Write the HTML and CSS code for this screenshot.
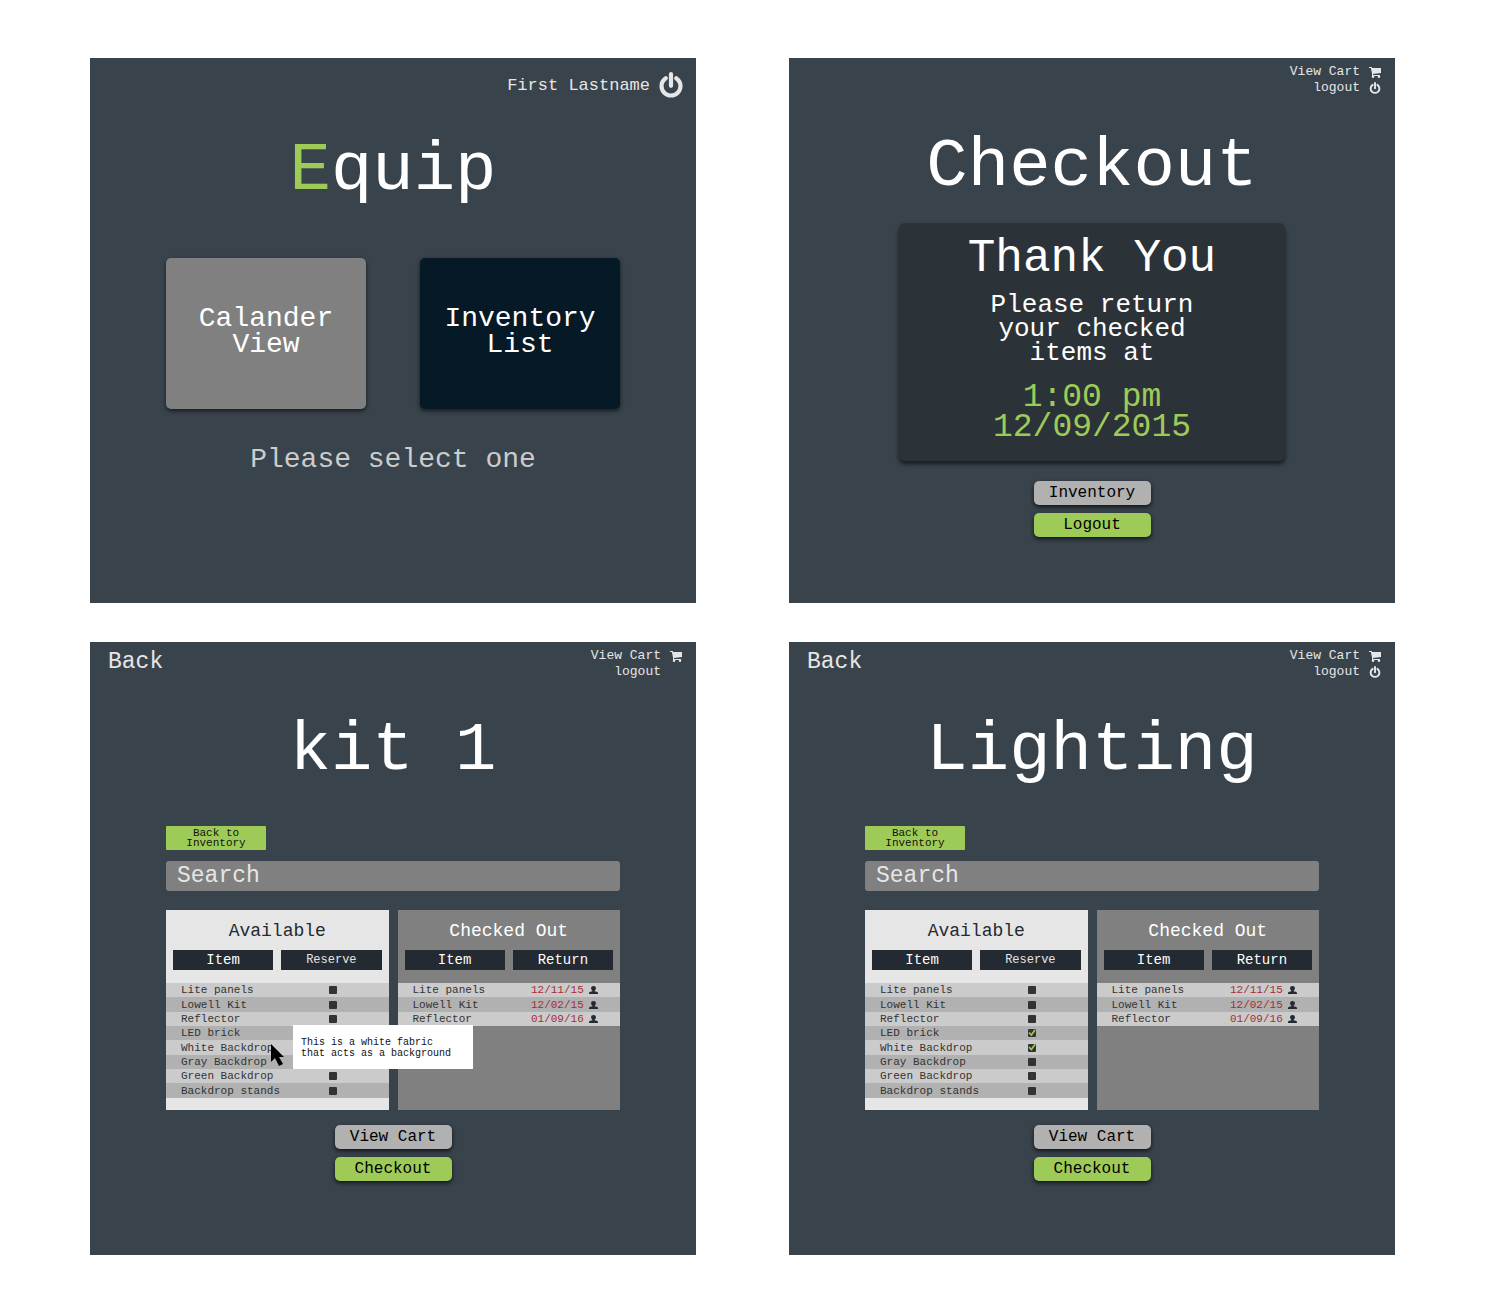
FILE: index.html
```html
<!DOCTYPE html>
<html lang="en">
<head>
<meta charset="utf-8">
<meta name="viewport" content="width=device-width, initial-scale=1">
<title>Equip</title>
<link rel="stylesheet" href="styles.css">
</head>
<body>
<svg class="sprite" aria-hidden="true">
  <symbol id="power" viewBox="0 0 24 26">
    <path d="M6.8 6.200C4 8.200 2.500 10.800 2.500 14a9.500 9.500 0 0 0 19 0c0-3.200-1.500-5.800-4.300-7.800" fill="none" stroke="currentColor" stroke-width="4.200" stroke-linecap="round"/>
    <path d="M12 2.200v11.600" fill="none" stroke="currentColor" stroke-width="4.200" stroke-linecap="round"/>
  </symbol>
  <symbol id="cart" viewBox="0 0 24 24">
    <path d="M0 2h5.500l1 2H24v10L8 16v2h14v2H6V15L3.800 4H0z" fill="currentColor"/>
    <circle cx="8" cy="21.500" r="2.500" fill="currentColor"/>
    <circle cx="20" cy="21.500" r="2.500" fill="currentColor"/>
  </symbol>
  <symbol id="user" viewBox="0 0 18 16">
    <path d="M9 0c3 0 4.800 1.800 4.800 4.500 0 2.300-1.300 3.500-2.300 4.700v1.600c2.500.2 6.500.4 6.500 3V16H0v-2.200c0-2.600 4-2.800 6.500-3V9.200C5.500 8 4.200 6.800 4.200 4.500 4.200 1.800 6 0 9 0z" fill="currentColor"/>
  </symbol>
</svg>

<main class="board">
  <section class="screen screen-home">
    <header class="topbar">
      <a class="account" href="#">First Lastname <svg class="icon-large" role="img" aria-label="Log out"><use href="#power"/></svg></a>
    </header>
    <h1 class="title"><span class="accent">E</span>quip</h1>
    <div class="content choices">
      <button class="choice choice-gray" type="button">Calander<br>View</button>
      <button class="choice choice-navy" type="button">Inventory<br>List</button>
    </div>
    <p class="hint">Please select one</p>
  </section>

  <section class="screen">
    <header class="topbar">
      <nav class="links">
        <a href="#">View Cart <svg class="icon"><use href="#cart"/></svg></a>
        <a href="#">logout <svg class="icon"><use href="#power"/></svg></a>
      </nav>
    </header>
    <h1 class="title">Checkout</h1>
    <div class="receipt">
      <h2 class="thanks">Thank You</h2>
      <p class="message">Please return<br>your checked<br>items at</p>
      <p class="due">1:00 pm<br>12/09/2015</p>
    </div>
    <div class="actions actions-receipt">
      <button class="button" type="button">Inventory</button>
      <button class="button button-green" type="button">Logout</button>
    </div>
  </section>

  <section class="screen screen-lists">
    <header class="topbar">
      <a class="back" href="#">Back</a>
      <nav class="links">
        <a href="#">View Cart <svg class="icon"><use href="#cart"/></svg></a>
        <a href="#">logout <span class="icon"></span></a>
      </nav>
    </header>
    <h1 class="title">kit 1</h1>
    <div class="content">
      <button class="to-inventory" type="button">Back to<br>Inventory</button>
      <input class="search" type="search" placeholder="Search" aria-label="Search">
      <div class="lists">
        <section class="list list-available">
          <h2 class="list-title">Available</h2>
          <table class="items">
            <thead><tr><th><span class="column">Item</span></th><th><span class="column column-small">Reserve</span></th></tr></thead>
            <tbody>
              <tr><td><label for="k1">Lite panels</label></td><td><input id="k1" type="checkbox"></td></tr>
              <tr><td><label for="k2">Lowell Kit</label></td><td><input id="k2" type="checkbox"></td></tr>
              <tr><td><label for="k3">Reflector</label></td><td><input id="k3" type="checkbox"></td></tr>
              <tr><td><label for="k4">LED brick</label></td><td><input id="k4" type="checkbox"></td></tr>
              <tr><td class="hovered"><label for="k5">White Backdrop</label>
                <span class="tooltip" role="tooltip">This is a white fabric<br>that acts as a background</span>
                <svg class="pointer" viewBox="0 0 14 22" aria-hidden="true"><path d="M1 0v18l4-4 4 8 4-2-4-7h5z"/></svg></td><td><input id="k5" type="checkbox"></td></tr>
              <tr><td><label for="k6">Gray Backdrop</label></td><td><input id="k6" type="checkbox"></td></tr>
              <tr><td><label for="k7">Green Backdrop</label></td><td><input id="k7" type="checkbox"></td></tr>
              <tr><td><label for="k8">Backdrop stands</label></td><td><input id="k8" type="checkbox"></td></tr>
            </tbody>
          </table>
        </section>
        <section class="list list-out">
          <h2 class="list-title">Checked Out</h2>
          <table class="items">
            <thead><tr><th><span class="column">Item</span></th><th><span class="column">Return</span></th></tr></thead>
            <tbody>
              <tr><td>Lite panels</td><td><span class="return">12/11/15 <svg class="user"><use href="#user"/></svg></span></td></tr>
              <tr><td>Lowell Kit</td><td><span class="return">12/02/15 <svg class="user"><use href="#user"/></svg></span></td></tr>
              <tr><td>Reflector</td><td><span class="return">01/09/16 <svg class="user"><use href="#user"/></svg></span></td></tr>
            </tbody>
          </table>
        </section>
      </div>
    </div>
    <div class="actions">
      <button class="button" type="button">View Cart</button>
      <button class="button button-green" type="button">Checkout</button>
    </div>
  </section>

  <section class="screen screen-lists">
    <header class="topbar">
      <a class="back" href="#">Back</a>
      <nav class="links">
        <a href="#">View Cart <svg class="icon"><use href="#cart"/></svg></a>
        <a href="#">logout <svg class="icon"><use href="#power"/></svg></a>
      </nav>
    </header>
    <h1 class="title">Lighting</h1>
    <div class="content">
      <button class="to-inventory" type="button">Back to<br>Inventory</button>
      <input class="search" type="search" placeholder="Search" aria-label="Search">
      <div class="lists">
        <section class="list list-available">
          <h2 class="list-title">Available</h2>
          <table class="items">
            <thead><tr><th><span class="column">Item</span></th><th><span class="column column-small">Reserve</span></th></tr></thead>
            <tbody>
              <tr><td><label for="l1">Lite panels</label></td><td><input id="l1" type="checkbox"></td></tr>
              <tr><td><label for="l2">Lowell Kit</label></td><td><input id="l2" type="checkbox"></td></tr>
              <tr><td><label for="l3">Reflector</label></td><td><input id="l3" type="checkbox"></td></tr>
              <tr><td><label for="l4">LED brick</label></td><td><input id="l4" type="checkbox" checked></td></tr>
              <tr><td><label for="l5">White Backdrop</label></td><td><input id="l5" type="checkbox" checked></td></tr>
              <tr><td><label for="l6">Gray Backdrop</label></td><td><input id="l6" type="checkbox"></td></tr>
              <tr><td><label for="l7">Green Backdrop</label></td><td><input id="l7" type="checkbox"></td></tr>
              <tr><td><label for="l8">Backdrop stands</label></td><td><input id="l8" type="checkbox"></td></tr>
            </tbody>
          </table>
        </section>
        <section class="list list-out">
          <h2 class="list-title">Checked Out</h2>
          <table class="items">
            <thead><tr><th><span class="column">Item</span></th><th><span class="column">Return</span></th></tr></thead>
            <tbody>
              <tr><td>Lite panels</td><td><span class="return">12/11/15 <svg class="user"><use href="#user"/></svg></span></td></tr>
              <tr><td>Lowell Kit</td><td><span class="return">12/02/15 <svg class="user"><use href="#user"/></svg></span></td></tr>
              <tr><td>Reflector</td><td><span class="return">01/09/16 <svg class="user"><use href="#user"/></svg></span></td></tr>
            </tbody>
          </table>
        </section>
      </div>
    </div>
    <div class="actions">
      <button class="button" type="button">View Cart</button>
      <button class="button button-green" type="button">Checkout</button>
    </div>
  </section>
</main>
</body>
</html>
```

FILE: styles.css
```css
:root {
  --slate: #39434b;
  --gray: #808080;
  --silver: #b1b1b1;
  --green: #9ecb58;
  --ink: #242a31;
  --light: #e6e6e6;
}

* {
  box-sizing: border-box;
}

body {
  margin: 0;
  background: #fff;
  color: #fff;
  font-family: "Liberation Mono", "Courier New", monospace;
}

h1, h2, p {
  margin: 0;
  font-weight: 400;
}

a {
  color: inherit;
  text-decoration: none;
}

button, input {
  font-family: inherit;
  border: 0;
  margin: 0;
}

button {
  cursor: pointer;
}

.sprite {
  display: none;
}

/* Board of screens */
.board {
  display: grid;
  grid-template-columns: 1fr 1fr;
  gap: 39px 93px;
  padding: 58px 105px 43px 90px;
}

.screen {
  background: var(--slate);
  padding-bottom: 66px;
}

.screen-lists {
  padding-bottom: 74px;
}

.topbar {
  display: flex;
  align-items: flex-start;
  min-height: 69px;
  padding: 6px 14px 0 18px;
  color: var(--light);
}

.screen-home .topbar {
  min-height: 73px;
  padding: 14px 13px 0;
}

.account {
  display: flex;
  align-items: center;
  gap: 9px;
  margin-left: auto;
  font-size: 17px;
}

.icon-large {
  width: 24px;
  height: 26px;
}

.back {
  font-size: 23px;
  line-height: 28px;
}

.links {
  display: flex;
  flex-direction: column;
  margin-left: auto;
  font-size: 13px;
  line-height: 16px;
}

.links a {
  display: flex;
  align-items: center;
  justify-content: flex-end;
  gap: 9px;
}

.icon {
  width: 12px;
  height: 12px;
}

.title {
  font-size: 69px;
  line-height: 80px;
  text-align: center;
}

.accent {
  color: var(--green);
}

.content {
  padding: 0 76px;
}

/* Home */
.choices {
  display: grid;
  grid-template-columns: 1fr 1fr;
  gap: 54px;
  margin-top: 47px;
}

.choice {
  min-height: 151px;
  padding: 0 0 4px;
  border-radius: 5px;
  box-shadow: 0 2px 4px rgba(0, 0, 0, 0.6);
  color: #fff;
  font-size: 28px;
  line-height: 26px;
}

.choice-gray {
  background: var(--gray);
}

.choice-navy {
  background: #061926;
}

.hint {
  margin-top: 35px;
  color: #ccc;
  font-size: 28px;
  line-height: 32px;
  text-align: center;
}

/* Checkout */
.receipt {
  margin: 16px 110px 0;
  padding: 10px 0 18px;
  border-radius: 6px;
  background: #2c3338;
  box-shadow: 0 3px 4px rgba(0, 0, 0, 0.6);
  text-align: center;
}

.thanks {
  font-size: 46px;
  line-height: 52px;
}

.message {
  margin-top: 8px;
  font-size: 26px;
  line-height: 24px;
}

.due {
  margin-top: 18px;
  color: var(--green);
  font-size: 33px;
  line-height: 30px;
}

.actions {
  display: flex;
  flex-direction: column;
  align-items: center;
  gap: 8px;
  margin-top: 15px;
}

.actions-receipt {
  margin-top: 20px;
}

.button {
  width: 117px;
  height: 24px;
  padding: 0;
  border-radius: 5px;
  background: var(--silver);
  box-shadow: 0 2px 4px rgba(0, 0, 0, 0.7);
  color: #000;
  font-size: 16px;
  line-height: 24px;
}

.button-green {
  background: var(--green);
}

/* Inventory lists */
.to-inventory {
  display: block;
  width: 100px;
  height: 24px;
  margin-top: 35px;
  padding: 0;
  border-radius: 1px;
  background: var(--green);
  color: #111;
  font-size: 11px;
  line-height: 10px;
}

.search {
  display: block;
  width: 100%;
  height: 30px;
  margin-top: 11px;
  padding: 0 11px;
  border-radius: 3px;
  background: var(--gray);
  color: var(--light);
  font-size: 23px;
  appearance: none;
}

.search::placeholder {
  color: var(--light);
}

.lists {
  display: grid;
  grid-template-columns: 1fr 1fr;
  gap: 9px;
  margin-top: 19px;
}

.list {
  min-height: 200px;
  padding-top: 11px;
}

.list-available {
  background: var(--light);
  color: var(--ink);
}

.list-out {
  background: var(--gray);
}

.list-title {
  font-size: 18px;
  line-height: 20px;
  text-align: center;
}

.items {
  width: 100%;
  margin-top: 9px;
  border-collapse: collapse;
  table-layout: fixed;
  color: #333;
  font-size: 11px;
  line-height: 14px;
}

.items th {
  padding: 0 4px 13px 7px;
  font-weight: 400;
}

.items th + th {
  padding: 0 7px 13px 4px;
}

.column {
  display: block;
  background: var(--ink);
  color: #fff;
  font-size: 14px;
  line-height: 20px;
}

.column-small {
  color: var(--light);
  font-size: 12px;
}

.items td {
  height: 14px;
  padding: 0 0 0 15px;
  white-space: nowrap;
}

.items td + td {
  padding: 0;
}

.items tbody tr {
  background: #cbcbcb;
}

.items tbody tr:nth-child(even) {
  background: var(--silver);
}

.items tbody tr:nth-child(3n + 2) td {
  height: 15px;
}

.items input {
  display: block;
  width: 8px;
  height: 8px;
  margin: 0 auto;
  border-radius: 1px;
  background: #333;
  appearance: none;
}

.items input:checked::before {
  content: "";
  display: block;
  width: 8px;
  height: 8px;
  background: var(--green);
  clip-path: polygon(6% 50%, 22% 38%, 42% 58%, 82% 4%, 98% 18%, 44% 90%);
}

.return {
  display: flex;
  align-items: center;
  justify-content: center;
  gap: 5px;
  color: #a82c38;
}

.user {
  width: 9px;
  height: 8px;
  color: var(--ink);
}

.hovered {
  position: relative;
}

.tooltip {
  position: absolute;
  z-index: 1;
  top: -15px;
  left: 127px;
  padding: 12px 22px 10px 8px;
  background: #fff;
  color: #111;
  font-size: 10px;
  line-height: 11px;
}

.pointer {
  position: absolute;
  z-index: 2;
  top: 4px;
  left: 104px;
  width: 14px;
  height: 22px;
}
```
